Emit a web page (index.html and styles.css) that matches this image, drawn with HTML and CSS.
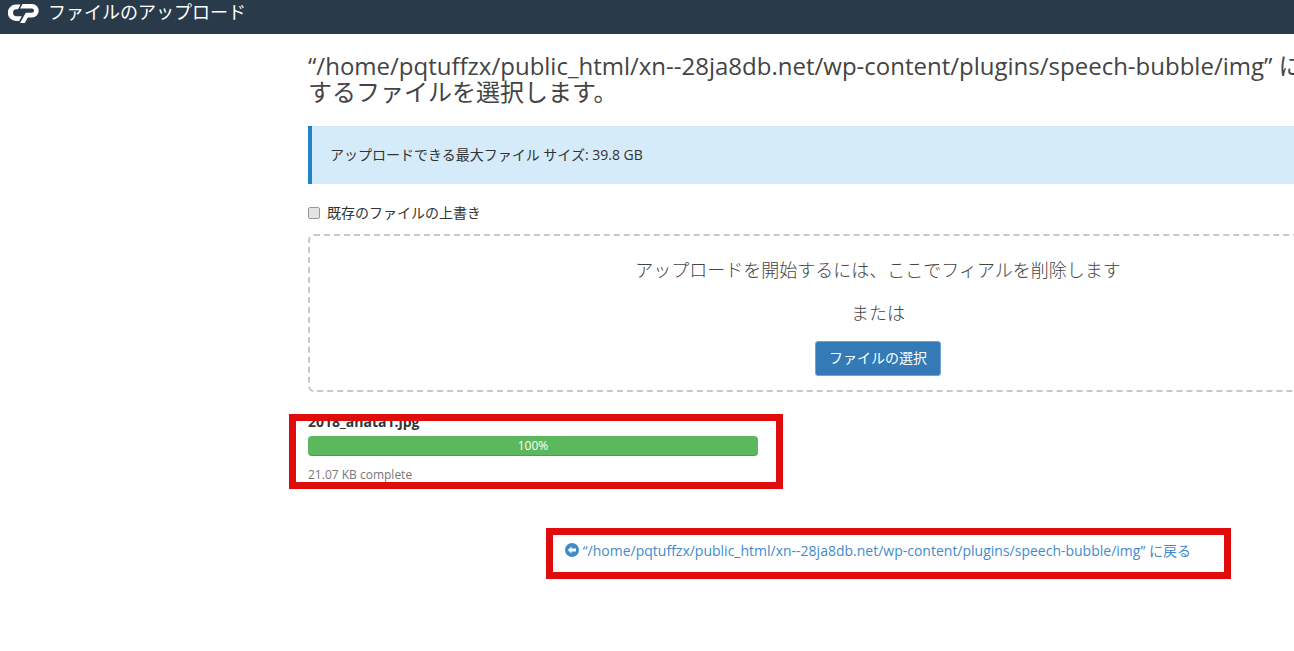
FILE: index.html
```html
<!DOCTYPE html>
<html lang="ja">
<head>
    <meta charset="UTF-8">
    <title>ファイルのアップロード</title>
    <link rel="stylesheet" href="styles.css">
</head>
<body>
    <div class="page">
        <header class="topbar">
            <svg class="logo" viewBox="0 0 32 20" aria-label="cPanel">
                <path d="M12.500 1.500H8a8.250 8.250 0 0 0 0 16.500h3.200l2.600-4.800H8.500a3.450 3.450 0 0 1 0-6.900h1.500z" fill="#fff"/>
                <path d="M14.500 1H24a6.750 6.750 0 0 1 0 13.500H19.800L16.800 20H12L17.800 9.800H23.800a2.200 2.200 0 0 0 0-4.400H12z" fill="#fff"/>
            </svg>
            <span class="topbar-title">ファイルのアップロード</span>
        </header>

        <main class="container">
            <h1 class="page-title">“/home/pqtuffzx/public_html/xn--28ja8db.net/wp-content/plugins/speech-bubble/img” にアップロードするファイルを選択します。</h1>

            <div class="info-alert">アップロードできる最大ファイル サイズ: 39.8 GB</div>

            <label class="overwrite">
                <input type="checkbox">
                <span>既存のファイルの上書き</span>
            </label>

            <div class="dropzone">
                <p class="drop-text">アップロードを開始するには、ここでフィアルを削除します</p>
                <p class="drop-text">または</p>
                <button class="select-button">ファイルの選択</button>
            </div>

            <div class="upload-item">
                <div class="file-name">2018_anata1.jpg</div>
                <div class="progress">100%</div>
                <div class="file-status">21.07 KB complete</div>
                <div class="red-box upload-box"></div>
            </div>

            <div class="back-row">
                <a class="back-link" href="#">
                    <svg class="back-icon" viewBox="0 0 14 14">
                        <circle cx="7" cy="7" r="7" fill="#428bca"/>
                        <path d="M2.800 7L6.500 3.400V5.600H11V8.400H6.500V10.600z" fill="#fff"/>
                    </svg>
                    “/home/pqtuffzx/public_html/xn--28ja8db.net/wp-content/plugins/speech-bubble/img” に戻る
                </a>
                <div class="red-box back-box"></div>
            </div>
        </main>
    </div>
</body>
</html>
```

FILE: styles.css
```css
body {
    margin: 0;
    font-family: "Open Sans", "Noto Sans CJK JP", sans-serif;
    font-size: 14px;
    line-height: 20px;
    color: #333;
    background-color: #fff;
}
.page {
    height: 100vh;
    overflow: hidden;
}
.topbar {
    display: flex;
    align-items: flex-start;
    height: 34px;
    background-color: #293a4a;
    color: #fff;
}
.logo {
    width: 32px;
    height: 20px;
    margin: 3px 0 0 8px;
}
.topbar-title {
    margin: 0 0 0 8px;
    font-size: 18px;
    line-height: 24px;
}
.container {
    width: 1140px;
    margin-left: 308px;
}
.page-title {
    margin: 19px 0 20px;
    font-size: 24px;
    font-weight: 400;
    line-height: 26.4px;
    color: #444;
}
.info-alert {
    padding: 19px 19px 19px 18px;
    border-left: 4px solid #1f83c6;
    background-color: #d6ebf9;
}
.overwrite {
    display: flex;
    align-items: center;
    gap: 7px;
    height: 20px;
    margin-top: 19px;
}
.overwrite input {
    appearance: none;
    width: 12px;
    height: 12px;
    margin: 0;
    border: 1px solid #9a9a9a;
    border-radius: 2px;
    background-color: #e4e4e4;
}
.dropzone {
    height: 154px;
    margin-top: 11px;
    border: 2px dashed #c8c8c8;
    border-radius: 6px;
    text-align: center;
}
.drop-text {
    margin: 0;
    padding-top: 23px;
    font-size: 18px;
    line-height: 20px;
    font-weight: 300;
    color: #444;
}
.drop-text:first-child {
    padding-top: 24px;
}
.select-button {
    height: 35px;
    margin-top: 18px;
    padding: 0 13px;
    border: 1px solid #6fa0e0;
    border-radius: 3px;
    background-color: #337ab7;
    color: #fff;
    font: inherit;
}
.upload-item {
    position: relative;
    width: 450px;
    margin-top: 20px;
}
.file-name {
    font-weight: 700;
}
.progress {
    height: 20px;
    margin-top: 4px;
    border-radius: 4px;
    background-color: #5cb85c;
    box-shadow: inset 0 -1px 0 rgba(0, 0, 0, 0.15);
    color: #fff;
    font-size: 12px;
    text-align: center;
}
.file-status {
    margin-top: 9px;
    font-size: 12px;
    color: #777;
}
.back-row {
    position: relative;
    margin-top: 56px;
    text-align: center;
}
.back-link {
    color: #428bca;
    text-decoration: none;
}
.back-icon {
    width: 14px;
    height: 14px;
    vertical-align: -1px;
}
/* annotation boxes drawn over the screenshot */
.red-box {
    position: absolute;
    border: 7px solid #e00c0c;
    box-sizing: border-box;
}
.upload-box {
    left: -19px;
    top: 2px;
    width: 494px;
    height: 75px;
}
.back-box {
    left: 238px;
    top: -13px;
    width: 685px;
    height: 51px;
}
```
